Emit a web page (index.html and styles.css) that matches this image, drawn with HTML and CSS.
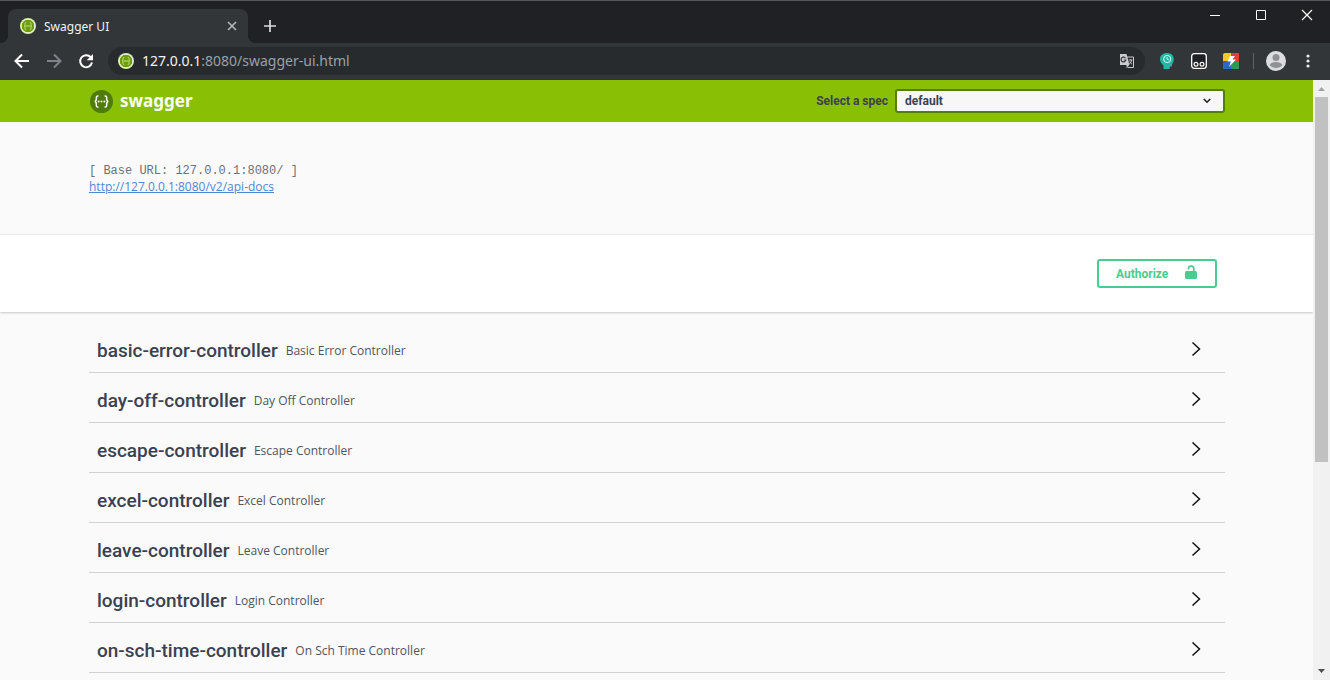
FILE: index.html
```html
<!DOCTYPE html>
<html lang="en">
<head>
<meta charset="utf-8">
<title>Swagger UI</title>
<link rel="stylesheet" href="styles.css">
</head>
<body>
<svg class="defs" aria-hidden="true">
  <symbol id="favicon" viewBox="0 0 16 16">
    <circle cx="8" cy="8" r="8" fill="#d5e8a8"/>
    <circle cx="8" cy="8" r="6.800" fill="#6b9c0c" stroke="#f1f8df" stroke-width="1"/>
    <path d="M6.300 4.400c-1.200 0-1.300.6-1.300 1.600S4.900 8 4 8c.9 0 1 .8 1 2s.1 1.600 1.300 1.600M9.700 4.400c1.200 0 1.300.6 1.300 1.600s.1 2 1 2c-.9 0-1 .8-1 2s-.1 1.600-1.300 1.600M5.500 8h5" fill="none" stroke="#c8e28c" stroke-width="1"/>
  </symbol>
  <symbol id="chevron" viewBox="0 0 10 16">
    <path d="M1.500 1.500 8.500 8l-7 6.500" fill="none" stroke="#111" stroke-width="1.500"/>
  </symbol>
</svg>
<div class="window">
  <header class="tabstrip">
    <div class="tab">
      <svg class="icon16"><use href="#favicon"/></svg>
      <span class="tab-title">Swagger UI</span>
      <button class="plain" aria-label="Close tab"><svg width="10" height="10" viewBox="0 0 10 10"><path d="m1 1 8 8M9 1 1 9" stroke="#b4b6b9" stroke-width="1.600"/></svg></button>
    </div>
    <button class="plain new-tab" aria-label="New tab"><svg width="12" height="12" viewBox="0 0 12 12"><path d="M6 0v12M0 6h12" stroke="#dadce0" stroke-width="1.700"/></svg></button>
    <div class="window-controls">
      <button class="plain" aria-label="Minimize"><svg width="12" height="12" viewBox="0 0 12 12"><path d="M1 6.500h10" stroke="#fff"/></svg></button>
      <button class="plain" aria-label="Maximize"><svg width="12" height="12" viewBox="0 0 12 12"><path d="M1.500 1.500h9v9h-9z" fill="none" stroke="#fff"/></svg></button>
      <button class="plain" aria-label="Close"><svg width="12" height="12" viewBox="0 0 12 12"><path d="m1 1 10 10M11 1 1 11" stroke="#fff" stroke-width="1.200"/></svg></button>
    </div>
  </header>
  <nav class="toolbar">
    <button class="plain" aria-label="Back"><svg width="16" height="16" viewBox="0 0 16 16"><path d="M15 8H2M8 1.500 1.500 8 8 14.500" fill="none" stroke="#fff" stroke-width="2"/></svg></button>
    <button class="plain" aria-label="Forward"><svg width="16" height="16" viewBox="0 0 16 16"><path d="M1 8h13M8 1.500 14.500 8 8 14.500" fill="none" stroke="#808387" stroke-width="2"/></svg></button>
    <button class="plain" aria-label="Reload"><svg width="16" height="16" viewBox="0 0 16 16"><path d="M12.700 4.200A6 6 0 1 0 14 9.600" fill="none" stroke="#fff" stroke-width="2"/><path d="M15 1v6.300H8.700z" fill="#fff"/></svg></button>
    <div class="address">
      <svg class="icon16"><use href="#favicon"/></svg>
      <span class="url"><b>127.0.0.1</b>:8080/swagger-ui.html</span>
      <button class="plain" aria-label="Translate this page"><svg width="16" height="16" viewBox="0 0 16 16"><path d="M7 4h7.500v10.500H8.500" fill="none" stroke="#c9cbce"/><path d="M1 1h6.500l3 11H1z" fill="#c9cbce"/><path d="M6.500 5.300A2.400 2.400 0 1 0 6.800 7H4.800" fill="none" stroke="#35363a" stroke-width="1.200"/><path d="M9.700 7H13.500M11.600 6v1M12.700 7c-.3 1.700-1 3-2.200 4M10.700 8.500c.6 1.100 1.300 2 2.300 2.700" fill="none" stroke="#c9cbce" stroke-width=".9"/><path d="M7.500 12v3l2.700-3z" fill="#c9cbce"/></svg></button>
    </div>
    <div class="extensions">
      <button class="plain" aria-label="Time extension"><svg width="16" height="16" viewBox="0 0 16 16"><path d="M8 0c4.500 0 6.800 2.800 6.800 6.300 0 2.200-.8 3.600-1.700 5V13.500H11l-.5 2.500H4.500v-3.500C2.300 10.600 1 8.600 1 6 1 2.500 4 0 8 0z" fill="#26b5a3"/><circle cx="8.200" cy="6" r="3.600" fill="none" stroke="#c9fff6"/><path d="M8 4V6.200l1.800.6" fill="none" stroke="#c9fff6"/></svg></button>
      <button class="plain" aria-label="Script extension"><svg width="16" height="16" viewBox="0 0 16 16"><rect x=".7" y=".7" width="14.600" height="14.600" rx="2.500" fill="#1f2024" stroke="#fff" stroke-width="1.300"/><g fill="none" stroke="#fff" stroke-width="1.200"><circle cx="5" cy="11.200" r="1.900"/><circle cx="11" cy="11.200" r="1.900"/></g></svg></button>
      <button class="plain" aria-label="Proxy extension"><svg width="16" height="16" viewBox="0 0 16 16"><rect width="16" height="16" rx="2" fill="#fbc61c"/><path d="M8 0h6a2 2 0 0 1 2 2v6H8z" fill="#e63e2e"/><path d="M0 8h8v8H2a2 2 0 0 1-2-2z" fill="#2b67c6"/><path d="M8 8h8v6a2 2 0 0 1-2 2H8z" fill="#2d9a54"/><path d="M7 3 4.500 8.500h3.300L6 14l7-7.500H9.500L12 3z" fill="#fff"/></svg></button>
      <span class="divider"></span>
      <button class="plain" aria-label="Profile"><svg width="20" height="20" viewBox="0 0 20 20"><circle cx="10" cy="10" r="10" fill="#dcdde0"/><circle cx="10" cy="6.500" r="3.500" fill="#8f9194"/><path d="M3.500 14c1.300-2 3.600-3 6.500-3s5.200 1 6.500 3c-1.600 2-3.900 3-6.500 3s-4.900-1-6.500-3z" fill="#8f9194"/></svg></button>
      <button class="plain menu" aria-label="Menu"><svg width="4" height="14" viewBox="0 0 4 14" fill="#e8eaed"><circle cx="2" cy="2" r="1.600"/><circle cx="2" cy="7" r="1.600"/><circle cx="2" cy="12" r="1.600"/></svg></button>
    </div>
  </nav>
  <div class="viewport">
    <main class="page">
      <div class="topbar wrapper">
        <a class="brand" href="#">
          <svg width="23" height="23" viewBox="0 0 24 24"><circle cx="12" cy="12" r="12" fill="#4f7c0a"/><path d="M8.800 6.300C6.500 6.100 6.600 7.300 6.600 8.900S6.300 12 4.800 12c1.500 0 1.800 1.500 1.800 3.100s-.1 2.800 2.200 2.600M15.200 6.300c2.300-.2 2.200 1 2.200 2.600s.3 3.100 1.800 3.100c-1.500 0-1.800 1.500-1.800 3.100s.1 2.800-2.200 2.600" fill="none" stroke="#fff" stroke-width="1.500"/><g fill="#fff"><circle cx="9" cy="12" r="1"/><circle cx="12" cy="12" r="1"/><circle cx="15" cy="12" r="1"/></g></svg>
          <span>swagger</span>
        </a>
        <div class="spec">
          <label for="spec">Select a spec</label>
          <div class="select-box">
            <select id="spec"><option>default</option></select>
            <svg width="8" height="6" viewBox="0 0 8 6"><path d="m.8 1 3.200 3.200L7.200 1" fill="none" stroke="#222" stroke-width="1.600"/></svg>
          </div>
        </div>
      </div>
      <section class="info wrapper">
        <pre class="base-url">[ Base URL: 127.0.0.1:8080/ ]</pre>
        <a class="docs" href="#">http://127.0.0.1:8080/v2/api-docs</a>
      </section>
      <section class="scheme wrapper">
        <button class="authorize">Authorize
          <svg width="12" height="15" viewBox="0 0 12 15"><path d="M3.500 4.500V3.800a2.500 2.500 0 0 1 5.300-.2V7" fill="none" stroke="#49cc90" stroke-width="1.700"/><rect y="6" width="12" height="8" rx="1.500" fill="#49cc90"/></svg>
        </button>
      </section>
      <section class="tags wrapper">
        <div class="tag"><h4>basic-error-controller</h4><small>Basic Error Controller</small><button class="plain" aria-label="Expand basic-error-controller"><svg class="chevron"><use href="#chevron"/></svg></button></div>
        <div class="tag"><h4>day-off-controller</h4><small>Day Off Controller</small><button class="plain" aria-label="Expand day-off-controller"><svg class="chevron"><use href="#chevron"/></svg></button></div>
        <div class="tag"><h4>escape-controller</h4><small>Escape Controller</small><button class="plain" aria-label="Expand escape-controller"><svg class="chevron"><use href="#chevron"/></svg></button></div>
        <div class="tag"><h4>excel-controller</h4><small>Excel Controller</small><button class="plain" aria-label="Expand excel-controller"><svg class="chevron"><use href="#chevron"/></svg></button></div>
        <div class="tag"><h4>leave-controller</h4><small>Leave Controller</small><button class="plain" aria-label="Expand leave-controller"><svg class="chevron"><use href="#chevron"/></svg></button></div>
        <div class="tag"><h4>login-controller</h4><small>Login Controller</small><button class="plain" aria-label="Expand login-controller"><svg class="chevron"><use href="#chevron"/></svg></button></div>
        <div class="tag"><h4>on-sch-time-controller</h4><small>On Sch Time Controller</small><button class="plain" aria-label="Expand on-sch-time-controller"><svg class="chevron"><use href="#chevron"/></svg></button></div>
      </section>
    </main>
    <div class="scrollbar" aria-hidden="true">
      <svg width="17" height="17" viewBox="0 0 17 17"><path d="m5 11 3.500-4 3.500 4z" fill="#a3a3a3"/></svg>
      <div class="track"><div class="thumb"></div></div>
      <svg width="17" height="17" viewBox="0 0 17 17"><path d="m5 6 3.500 4L12 6z" fill="#505050"/></svg>
    </div>
  </div>
</div>
</body>
</html>
```
FILE: styles.css
```css
* { box-sizing: border-box; }
body { margin: 0; font-family: "Open Sans", "Noto Sans", sans-serif; color: #3b4151; }
.defs { position: absolute; width: 0; height: 0; }
svg { display: block; flex: none; }
.icon16 { width: 16px; height: 16px; }
.plain { display: flex; align-items: center; justify-content: center; padding: 0; border: 0; background: none; }

.window { display: flex; flex-direction: column; height: 100vh; overflow: hidden; }

.tabstrip { display: flex; flex: none; height: 43px; padding: 8px 0 0 8px; border-top: 1px solid #55595c; background: #202124; }
.tab { position: relative; display: flex; align-items: center; gap: 8px; width: 240px; padding: 0 11px 0 12px; border-radius: 8px 8px 0 0; background: #323639; }
.tab::before, .tab::after { content: ""; position: absolute; bottom: 0; width: 8px; height: 8px; }
.tab::before { right: 100%; background: radial-gradient(circle at 0 0, #202124 8px, #323639 8px); }
.tab::after { left: 100%; background: radial-gradient(circle at 100% 0, #202124 8px, #323639 8px); }
.tab-title { flex: 1; font-family: "Noto Sans", sans-serif; font-size: 12px; color: #f1f3f4; }
.new-tab { width: 44px; }
.window-controls { display: flex; height: 12px; margin-left: auto; }
.window-controls button { width: 46px; }

.toolbar { display: flex; flex: none; align-items: center; height: 37px; padding: 0 20px 2px 14px; background: #323639; }
.toolbar > button { width: 16px; margin-right: 16px; }
.address { display: flex; flex: 1; align-items: center; gap: 8px; height: 28px; margin-left: -2px; padding: 0 10px; border-radius: 14px; background: #282b2e; }
.url { flex: 1; font-family: "Noto Sans", sans-serif; font-size: 14px; color: #9aa0a6; }
.url b { font-weight: 400; color: #f1f3f4; }
.extensions { display: flex; align-items: center; gap: 16px; padding-left: 14px; }
.divider { width: 1px; height: 16px; margin: 0 -4px 0 -2px; background: #5f6368; }
.menu { margin-left: 4px; }

.viewport { display: flex; flex: 1; min-height: 0; }
.page { flex: 1; overflow: hidden; background: #fafafa; }
.wrapper { padding-right: 88px; padding-left: 89px; }

.topbar { display: flex; align-items: center; justify-content: space-between; height: 42px; background: #89bf04; }
.brand { display: flex; align-items: center; gap: 7px; padding-left: 1px; font-family: "Noto Sans", sans-serif; font-size: 17px; font-weight: 700; line-height: 24px; color: #fff; text-decoration: none; }
.spec { display: flex; align-items: center; gap: 7px; font-family: Roboto, sans-serif; font-size: 12px; font-weight: 700; }
.select-box { position: relative; width: 330px; }
.select-box select { display: block; width: 100%; height: 24px; padding: 0 8px; border: 2px solid #547f00; border-radius: 3px; appearance: none; background: #f7f7f7; font: inherit; color: #3b4151; }
.select-box svg { position: absolute; top: 9px; right: 14px; pointer-events: none; }

.info { height: 112px; padding-top: 41px; font-size: 12px; line-height: 16px; }
.base-url { margin: 0; font-family: "Liberation Mono", monospace; font-size: 12px; line-height: 16px; color: #6b707b; }
.docs { color: #4f86d8; }

.scheme { display: flex; align-items: center; justify-content: flex-end; height: 78px; border-top: 1px solid #ececec; background: #fff; box-shadow: 0 1px 2px rgba(0, 0, 0, .2); }
.authorize { display: flex; align-items: center; justify-content: space-between; width: 120px; height: 29px; margin-right: 8px; padding: 0 18px 0 17px; border: 2px solid #49cc90; border-radius: 3px; background: #fff; font-family: Roboto, sans-serif; font-size: 12px; font-weight: 700; color: #49cc90; }
.authorize svg { margin-bottom: 2px; }

.tags { padding-top: 11px; }
.tag { display: flex; align-items: center; gap: 8px; height: 50px; padding: 6px 24px 0 8px; border-bottom: 1px solid #d0d1d3; }
.tag h4 { margin: 0; font-family: Roboto, sans-serif; font-size: 19px; font-weight: 500; line-height: 26px; }
.tag small { font-size: 12px; line-height: 18px; color: #50555f; }
.tag button { margin: 0 0 4px auto; }
.chevron { width: 10px; height: 16px; }

.scrollbar { display: flex; flex-direction: column; width: 17px; background: #f1f1f1; }
.track { flex: 1; padding: 0 2px; }
.thumb { height: 64.5%; background: #c1c1c1; }
```
